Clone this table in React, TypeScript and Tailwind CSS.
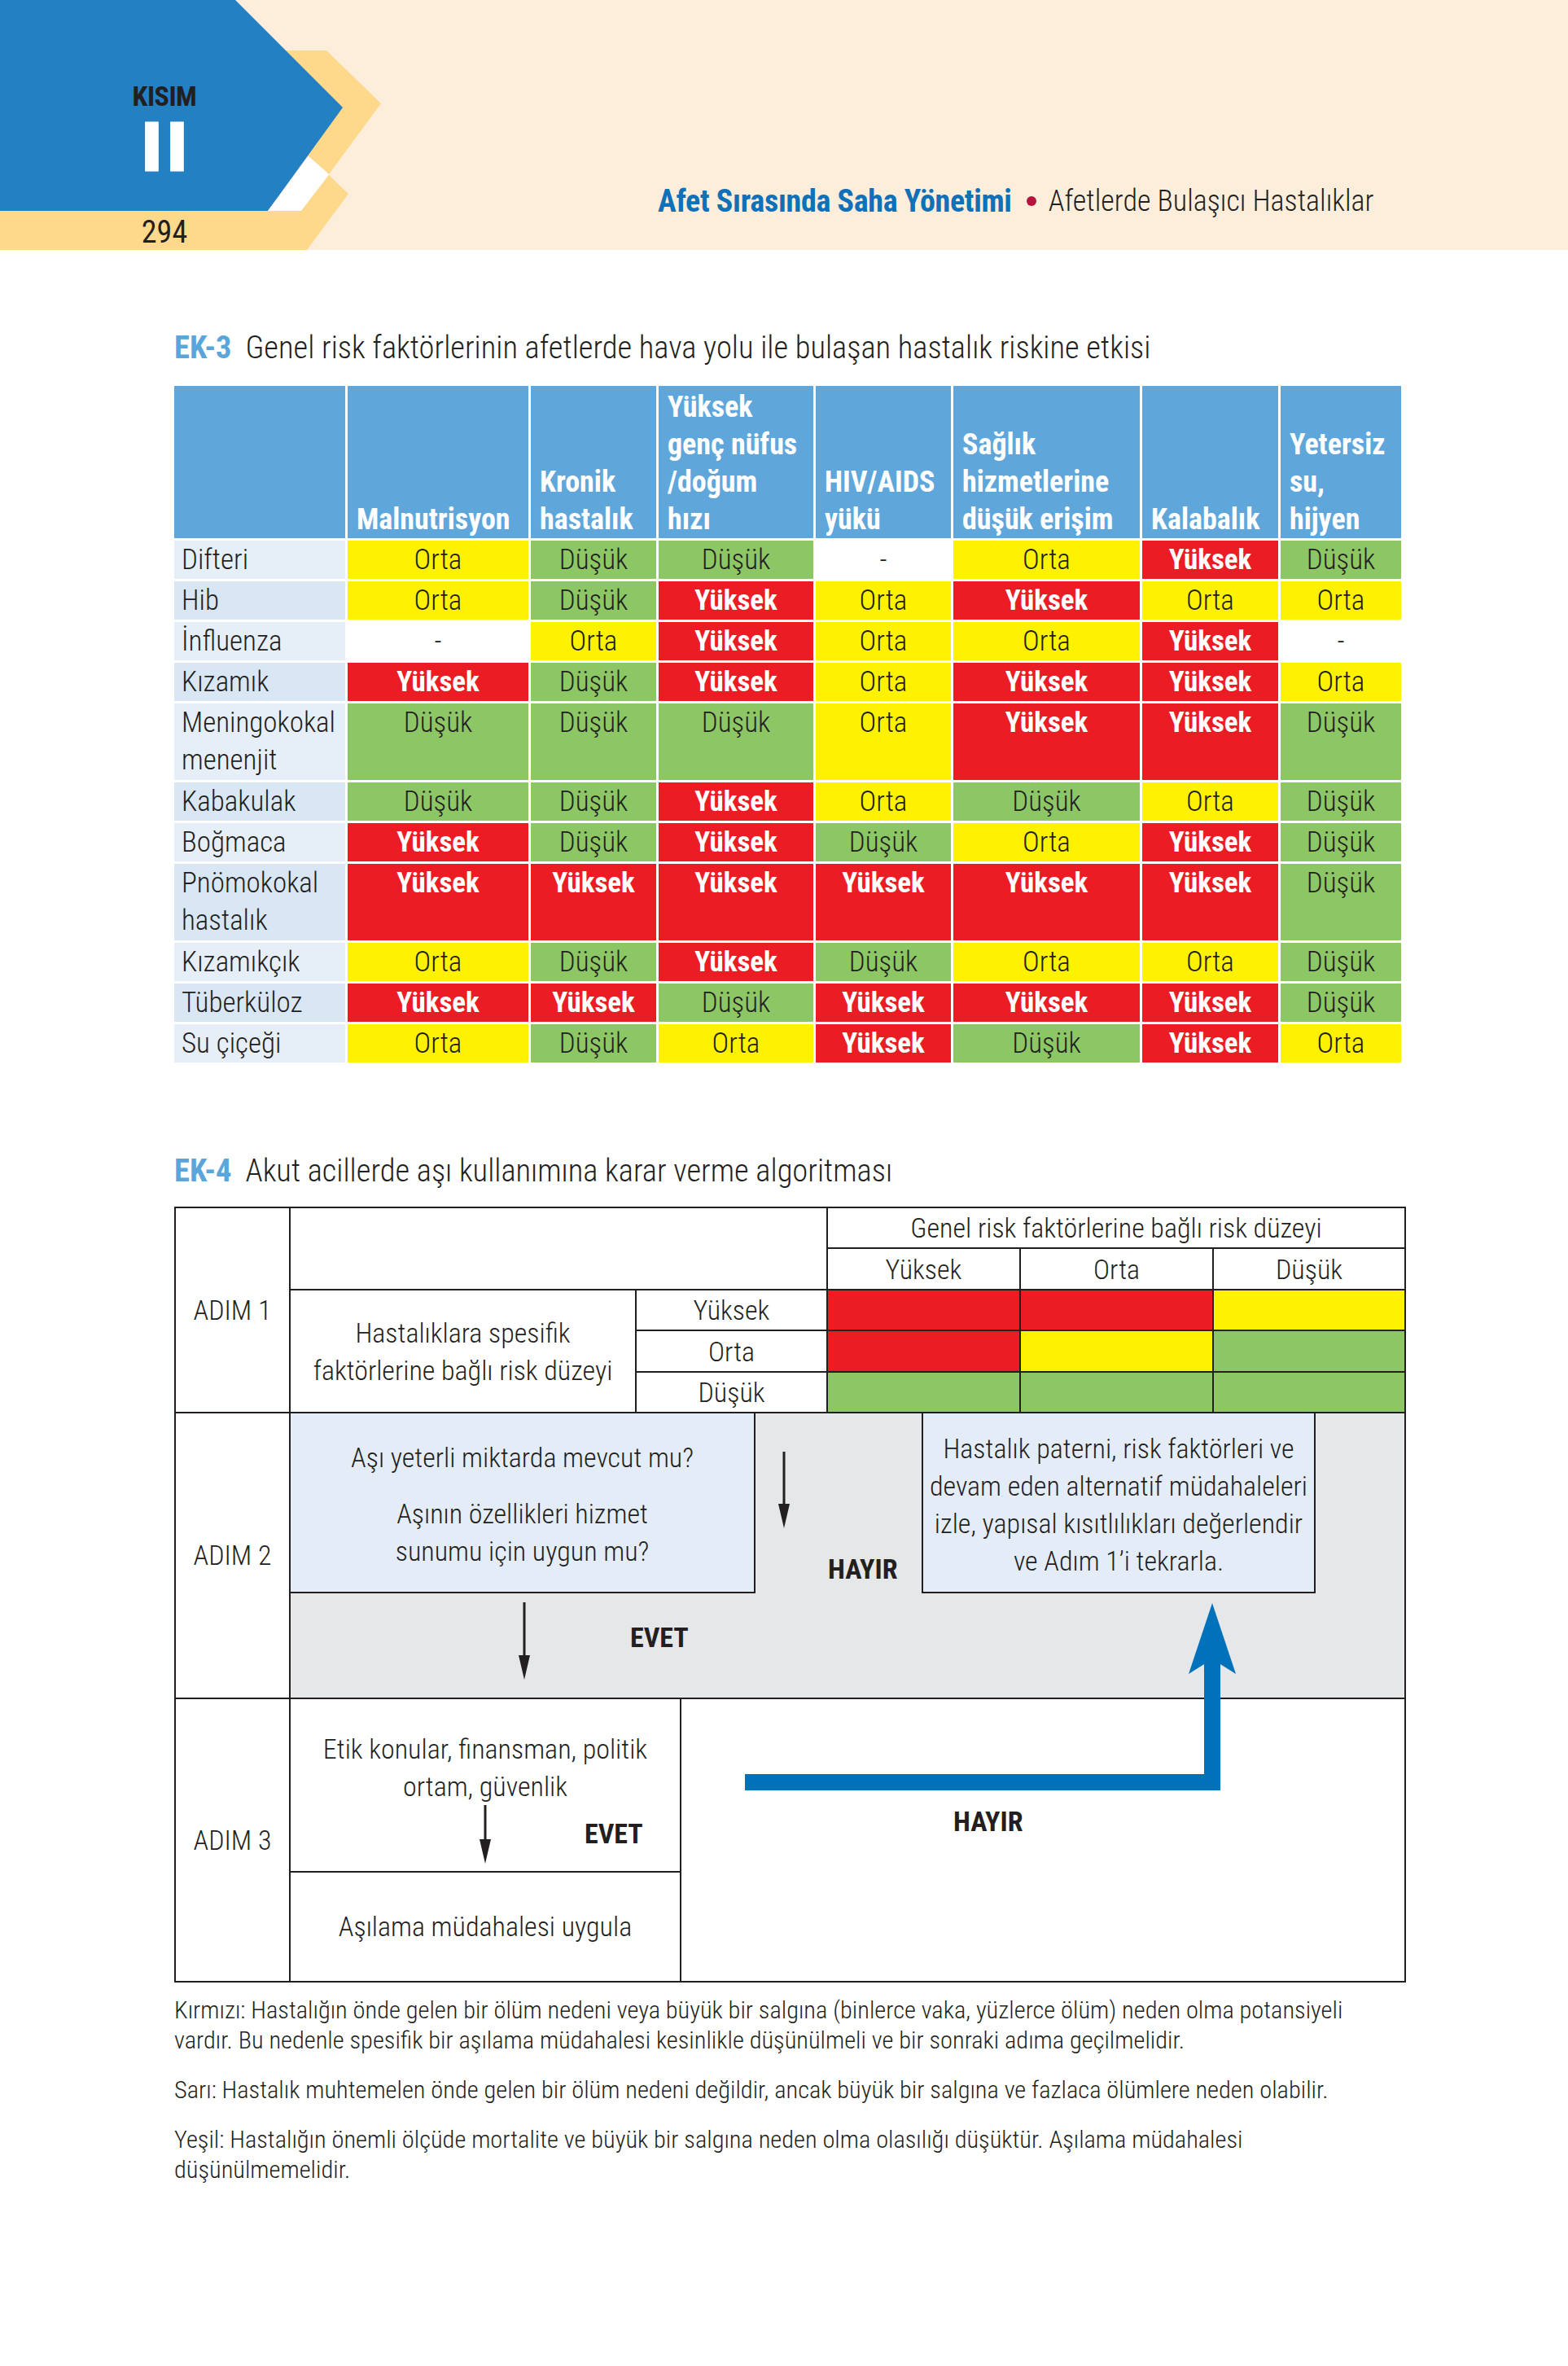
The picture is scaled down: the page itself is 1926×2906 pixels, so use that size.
import React from "react";

type V = "O" | "D" | "Y" | "-";

const rows: { label: React.ReactNode; tall?: boolean; v: V[] }[] = [
  { label: "Difteri", v: ["O", "D", "D", "-", "O", "Y", "D"] },
  { label: "Hib", v: ["O", "D", "Y", "O", "Y", "O", "O"] },
  { label: "İnfluenza", v: ["-", "O", "Y", "O", "O", "Y", "-"] },
  { label: "Kızamık", v: ["Y", "D", "Y", "O", "Y", "Y", "O"] },
  { label: <>Meningokokal<br />menenjit</>, tall: true, v: ["D", "D", "D", "O", "Y", "Y", "D"] },
  { label: "Kabakulak", v: ["D", "D", "Y", "O", "D", "O", "D"] },
  { label: "Boğmaca", v: ["Y", "D", "Y", "D", "O", "Y", "D"] },
  { label: <>Pnömokokal<br />hastalık</>, tall: true, v: ["Y", "Y", "Y", "Y", "Y", "Y", "D"] },
  { label: "Kızamıkçık", v: ["O", "D", "Y", "D", "O", "O", "D"] },
  { label: "Tüberküloz", v: ["Y", "Y", "D", "Y", "Y", "Y", "D"] },
  { label: "Su çiçeği", v: ["O", "D", "O", "Y", "D", "Y", "O"] },
];

const cellCls: Record<V, string> = {
  O: "bg-[#fff200] text-[#231f20] font-light",
  D: "bg-[#8cc665] text-[#231f20] font-light",
  Y: "bg-[#ec1c24] text-white font-bold",
  "-": "bg-white text-[#231f20] font-light",
};
const cellText: Record<V, string> = { O: "Orta", D: "Düşük", Y: "Yüksek", "-": "-" };

const headers: React.ReactNode[] = [
  "",
  "Malnutrisyon",
  <>Kronik<br />hastalık</>,
  <>Yüksek<br />genç nüfus<br />/doğum<br />hızı</>,
  <>HIV/AIDS<br />yükü</>,
  <>Sağlık<br />hizmetlerine<br />düşük erişim</>,
  "Kalabalık",
  <>Yetersiz<br />su,<br />hijyen</>,
];

function DownArrow({ h }: { h: number }) {
  return (
    <svg width="16" height={h} viewBox={`0 0 16 ${h}`} className="block shrink-0">
      <line x1="8" y1="0" x2="8" y2={h - 20} stroke="#231f20" strokeWidth="3" />
      <polygon points={`1,${h - 30} 15,${h - 30} 8,${h}`} fill="#231f20" />
    </svg>
  );
}

function Header() {
  return (
    <div className="relative h-[307px] w-full bg-[#fdeedb] flex items-start pl-[808px] pt-[224px]">
      <svg
        className="absolute left-0 top-0"
        width="480"
        height="307"
        viewBox="0 0 480 307"
      >
        <polygon points="330,62 401,62 468,127 404,214 379,192 330,192" fill="#fed98b" />
        <polygon points="0,0 289,0 421,132 329,259 0,259" fill="#2280c3" />
        <polygon points="379,192 404,214 370,259 329,259" fill="#ffffff" />
        <polygon points="0,259 370,259 404,215 428,238 377,307 0,307" fill="#fed98b" />
      </svg>
      <div className="absolute left-0 top-0 w-[404px] flex flex-col items-center">
        <div className="mt-[99px] text-[34px] leading-[38px] font-bold tracking-[-0.5px] text-[#231f20]">
          KISIM
        </div>
        <div className="mt-[8px] text-[82px] leading-[72px] font-black tracking-[8px] pl-[8px] text-white [-webkit-text-stroke:3px_white]">
          II
        </div>
        <div className="mt-[46px] text-[38px] leading-[44px] font-normal text-[#231f20]">
          294
        </div>
      </div>
      <div className="relative flex items-center leading-[46px]">
        <span className="text-[38px] font-bold text-[#1071b8] tracking-[-0.3px]">Afet Sırasında Saha Yönetimi</span>
        <span className="inline-block w-[12px] h-[12px] rounded-full bg-[#b8123f] ml-[18px] mr-[15px]" />
        <span className="text-[36px] font-light text-[#231f20]">Afetlerde Bulaşıcı Hastalıklar</span>
      </div>
    </div>
  );
}

function RiskTable() {
  return (
    <div className="grid grid-cols-[210px_222px_154px_190px_166px_229px_167px_148px] grid-rows-[187px_47px_47px_47px_47px_94px_47px_47px_94px_47px_47px_47px] gap-[3px] mt-[25px] w-[1507px]">
      {headers.map((h, i) => (
        <div
          key={"h" + i}
          className="bg-[#5fa7db] flex flex-col justify-end px-[11px] pb-[0px] text-[36px] leading-[46px] font-bold text-white"
        >
          <div>{h}</div>
        </div>
      ))}
      {rows.map((r, ri) => (
        <React.Fragment key={"r" + ri}>
          <div
            className={
              ri % 2 === 0
                ? "bg-[#e6eef8] pl-[9px] pt-[1px] text-[35px] leading-[46px] font-light text-[#231f20]"
                : "bg-[#d9e6f4] pl-[9px] pt-[1px] text-[35px] leading-[46px] font-light text-[#231f20]"
            }
          >
            {r.label}
          </div>
          {r.v.map((v, ci) => (
            <div key={ci} className={`${cellCls[v]} text-center pt-[1px] text-[35px] leading-[46px]`}>
              {cellText[v]}
            </div>
          ))}
        </React.Fragment>
      ))}
    </div>
  );
}

function Algorithm() {
  return (
    <div className="relative mt-[22px] w-[1513px] border-2 border-[#231f20] text-[34px] font-light text-[#231f20]">
      {/* ADIM 1 */}
      <div className="flex h-[250px]">
        <div className="w-[141px] shrink-0 border-r-2 border-[#231f20] flex items-center justify-center">
          ADIM 1
        </div>
        <div className="flex-1 grid grid-cols-[423px_233px_235px_235px_1fr] grid-rows-[48px_49px_48px_49px_48px] gap-[2px] bg-[#231f20] text-center leading-[46px]">
          <div className="col-span-2 row-span-2 bg-white" />
          <div className="col-span-3 bg-white flex items-center justify-center">
            Genel risk faktörlerine bağlı risk düzeyi
          </div>
          <div className="bg-white flex items-center justify-center">Yüksek</div>
          <div className="bg-white flex items-center justify-center">Orta</div>
          <div className="bg-white flex items-center justify-center">Düşük</div>
          <div className="row-span-3 bg-white flex items-center justify-center">
            <div>
              Hastalıklara spesifik
              <br />
              faktörlerine bağlı risk düzeyi
            </div>
          </div>
          <div className="bg-white flex items-center justify-center">Yüksek</div>
          <div className="bg-[#ec1c24]" />
          <div className="bg-[#ec1c24]" />
          <div className="bg-[#fff200]" />
          <div className="bg-white flex items-center justify-center">Orta</div>
          <div className="bg-[#ec1c24]" />
          <div className="bg-[#fff200]" />
          <div className="bg-[#8cc665]" />
          <div className="bg-white flex items-center justify-center">Düşük</div>
          <div className="bg-[#8cc665]" />
          <div className="bg-[#8cc665]" />
          <div className="bg-[#8cc665]" />
        </div>
      </div>

      {/* ADIM 2 */}
      <div className="flex h-[351px] border-t-2 border-[#231f20]">
        <div className="w-[141px] shrink-0 border-r-2 border-[#231f20] flex items-center justify-center">
          ADIM 2
        </div>
        <div className="flex-1 bg-[#e6e7e8] flex flex-col">
          <div className="flex items-start">
            <div className="w-[571px] h-[221px] shrink-0 bg-[#e4ecf7] border-r-2 border-b-2 border-[#231f20] flex flex-col items-center pt-[31px] leading-[46px] text-center">
              <div>Aşı yeterli miktarda mevcut mu?</div>
              <div className="mt-[23px]">
                Aşının özellikleri hizmet
                <br />
                sunumu için uygun mu?
              </div>
            </div>
            <div className="w-[204px] shrink-0 flex flex-col">
              <div className="ml-[27px] mt-[47px]">
                <DownArrow h={94} />
              </div>
              <div className="ml-[89px] mt-[30px] font-bold leading-[40px]">HAYIR</div>
            </div>
            <div className="w-[484px] h-[221px] shrink-0 bg-[#e4ecf7] border-x-2 border-b-2 border-[#231f20] pt-[20px] leading-[46px] text-center">
              Hastalık paterni, risk faktörleri ve
              <br />
              devam eden alternatif müdahaleleri
              <br />
              izle, yapısal kısıtlılıkları değerlendir
              <br />
              ve Adım 1’i tekrarla.
            </div>
          </div>
          <div className="flex items-start">
            <div className="ml-[279px] mt-[11px]">
              <DownArrow h={95} />
            </div>
            <div className="ml-[122px] mt-[34px] font-bold leading-[40px]">EVET</div>
          </div>
        </div>
      </div>

      {/* ADIM 3 */}
      <div className="flex h-[348px] border-t-2 border-[#231f20]">
        <div className="w-[141px] shrink-0 border-r-2 border-[#231f20] flex items-center justify-center">
          ADIM 3
        </div>
        <div className="w-[480px] shrink-0 border-r-2 border-[#231f20] flex flex-col">
          <div className="h-[213px] border-b-2 border-[#231f20] flex flex-col pt-[38px]">
            <div className="text-center leading-[46px]">
              Etik konular, finansman, politik
              <br />
              ortam, güvenlik
            </div>
            <div className="flex items-start">
              <div className="ml-[231px]">
                <DownArrow h={72} />
              </div>
              <div className="ml-[114px] mt-[15px] font-bold leading-[40px]">EVET</div>
            </div>
          </div>
          <div className="flex-1 flex items-center justify-center">Aşılama müdahalesi uygula</div>
        </div>
        <div className="flex-1 pl-[334px] pt-[130px]">
          <div className="font-bold leading-[40px]">HAYIR</div>
        </div>
      </div>

      <svg
        className="absolute left-0 top-0 pointer-events-none"
        width="1509"
        height="947"
        viewBox="0 0 1509 947"
      >
        <polygon
          points="699,695 1263,695 1263,560 1244,572 1273,485 1302,572 1283,560 1283,715 699,715"
          fill="#0071bb"
        />
      </svg>
    </div>
  );
}

export default function App() {
  return (
    <div className="w-[1926px] min-h-[2906px] bg-white font-['Roboto_Condensed','Liberation_Sans',sans-serif] text-[#231f20]">
      <Header />
      <div className="ml-[214px] flex flex-col">
        <div className="mt-[98px] text-[38.5px] leading-[44px] flex">
          <span className="font-bold text-[#5aa5da]">EK-3</span>
          <span className="ml-[17px] font-light">
            Genel risk faktörlerinin afetlerde hava yolu ile bulaşan hastalık riskine etkisi
          </span>
        </div>
        <RiskTable />
        <div className="mt-[111px] text-[38.5px] leading-[44px] flex">
          <span className="font-bold text-[#5aa5da]">EK-4</span>
          <span className="ml-[17px] font-light">Akut acillerde aşı kullanımına karar verme algoritması</span>
        </div>
        <Algorithm />
        <div className="mt-[15px] text-[30.4px] leading-[37px] font-light w-[1500px]">
          <p>
            Kırmızı: Hastalığın önde gelen bir ölüm nedeni veya büyük bir salgına (binlerce vaka, yüzlerce ölüm) neden olma potansiyeli
            <br />
            vardır. Bu nedenle spesifik bir aşılama müdahalesi kesinlikle düşünülmeli ve bir sonraki adıma geçilmelidir.
          </p>
          <p className="mt-[24px]">
            Sarı: Hastalık muhtemelen önde gelen bir ölüm nedeni değildir, ancak büyük bir salgına ve fazlaca ölümlere neden olabilir.
          </p>
          <p className="mt-[24px]">
            Yeşil: Hastalığın önemli ölçüde mortalite ve büyük bir salgına neden olma olasılığı düşüktür. Aşılama müdahalesi
            <br />
            düşünülmemelidir.
          </p>
        </div>
      </div>
    </div>
  );
}
